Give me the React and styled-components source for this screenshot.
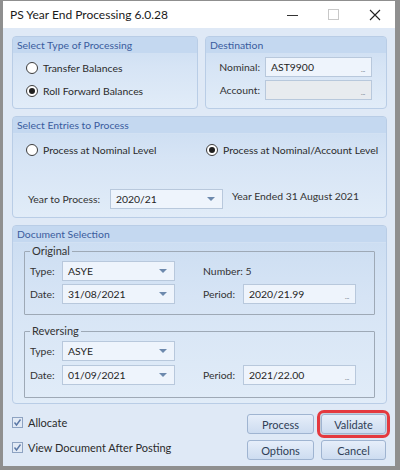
import styled, { createGlobalStyle } from 'styled-components';

const Global = createGlobalStyle`
  html, body { margin: 0; padding: 0; background: #ffffff; }
  body { font-family: Lato, "Noto Sans", sans-serif; font-size: 10.4px; color: #2b2b2b; }
`;

// window frame
const Frame = styled.div`
  width: 400px;
  height: 470px;
  box-sizing: border-box;
  background: #8f8f8f;
  padding: 1px 5px 4px 3px;
  display: flex;
  flex-direction: column;
`;

const TitleBar = styled.div`
  height: 27px;
  background: #ffffff;
  display: flex;
  align-items: center;
  padding-left: 7px;
  flex-shrink: 0;
`;

const Title = styled.div`
  flex: 1;
  font-size: 12px;
  color: #1a1a1a;
`;

const WinBtn = styled.div`
  width: 41px;
  height: 27px;
  display: flex;
  align-items: center;
  justify-content: center;
`;

const Body = styled.div`
  flex: 1;
  background: #dfe9f6;
  padding: 8px 8px 0 9px;
  display: flex;
  flex-direction: column;
  gap: 7px;
`;

const Row = styled.div`
  display: flex;
  gap: 7px;
`;

// blue panel with header band
const Panel = styled.div`
  width: ${p => p.$w || 'auto'};
  height: ${p => p.$h}px;
  flex-shrink: 0;
  box-sizing: border-box;
  border: 1px solid #b9cde6;
  border-radius: 4px;
  background: linear-gradient(#cadcf1 0%, #d6e4f5 40%, #e1ecf8 100%);
  display: flex;
  flex-direction: column;
  overflow: hidden;
`;

const PanelHead = styled.div`
  height: 16px;
  flex-shrink: 0;
  background: #c4d8f0;
  border-bottom: 1px solid #d2e1f3;
  color: #3a5c9e;
  padding-left: 4px;
  display: flex;
  align-items: center;
  font-size: 10.4px;
`;

const PanelBody = styled.div`
  flex: 1;
  display: flex;
  flex-direction: column;
  padding: ${p => p.$pad};
  gap: ${p => p.$gap || 0}px;
`;

const RadioRow = styled.label`
  display: flex;
  align-items: center;
  gap: 5px;
  width: ${p => p.$w || 'auto'};
  height: 20px;
  white-space: nowrap;
`;

const RadioDot = styled.span`
  width: 12px;
  height: 12px;
  box-sizing: border-box;
  border-radius: 50%;
  border: 1px solid #3d3d3d;
  background: #ffffff;
  display: flex;
  align-items: center;
  justify-content: center;
  &::after {
    content: '';
    width: 6px;
    height: 6px;
    border-radius: 50%;
    background: ${p => (p.$on ? '#1f1f1f' : 'transparent')};
  }
`;

const FieldRow = styled.div`
  display: flex;
  align-items: center;
  height: 20px;
  gap: ${p => p.$gap ?? 5}px;
`;

const Label = styled.span`
  width: ${p => p.$w}px;
  text-align: ${p => p.$align || 'left'};
  margin-left: ${p => p.$ml || 0}px;
  margin-top: ${p => p.$mt || 0}px;
  padding-left: ${p => p.$pl || 0}px;
  flex-shrink: 0;
  white-space: nowrap;
  color: #333;
`;

const Input = styled.div`
  width: ${p => p.$w}px;
  height: 20px;
  box-sizing: border-box;
  border: 1px solid #b8c8dc;
  background: ${p => (p.$disabled ? '#e8ebef' : '#eef4fc')};
  display: flex;
  align-items: center;
  padding: 0 6px 0 5px;
  color: #1e1e1e;
  flex-shrink: 0;
`;

const InputText = styled.span`
  flex: 1;
`;

const Dots = styled.span`
  color: #8a94a2;
  font-size: 8px;
  margin-top: 3px;
  letter-spacing: -0.5px;
`;

const Arrow = styled.span`
  width: 0;
  height: 0;
  border-left: 4px solid transparent;
  border-right: 4px solid transparent;
  border-top: 4px solid #6d89ad;
  margin-right: 1px;
`;

const Group = styled.fieldset`
  margin: 0;
  border: 1px solid #9ea9b6;
  border-radius: 1px;
  padding: 4px 0 6px 5px;
  display: flex;
  flex-direction: column;
  gap: ${p => p.$gap}px;
  height: ${p => p.$h}px;
  box-sizing: border-box;
  & > legend {
    padding: 0 2px;
    margin-left: 0;
    color: #333;
    font-size: 11px;
    line-height: 12px;
  }
`;

const Footer = styled.div`
  flex: 1;
  display: flex;
  justify-content: space-between;
`;

const Checks = styled.div`
  display: flex;
  flex-direction: column;
  gap: 5px;
  padding-top: 1px;
`;

const CheckRow = styled.label`
  display: flex;
  align-items: center;
  gap: 5px;
  height: 20px;
  font-size: 11px;
`;

const Box = styled.span`
  width: 11px;
  height: 11px;
  box-sizing: border-box;
  border: 1px solid #8ea3c2;
  background: #e2eaf5;
  display: flex;
  align-items: center;
  justify-content: center;
`;

const Buttons = styled.div`
  display: grid;
  grid-template-columns: 67px 65px;
  grid-auto-rows: 20px;
  column-gap: 7px;
  row-gap: 6px;
  padding-top: 3px;
  margin-right: 1px;
`;

const Button = styled.div`
  box-sizing: border-box;
  height: 20px;
  border: 1px solid #9fb4d1;
  border-radius: 3px;
  background: linear-gradient(#e6eefa, #cddcf0);
  display: flex;
  align-items: center;
  justify-content: center;
  color: #2f3e56;
  font-size: 11px;
  ${p => p.$focus && `
    outline: 3px solid #e4393f;
    outline-offset: 1px;
    box-shadow: 0 0 4px rgba(0,0,0,0.3);
  `}
`;

const Combo = ({ w, value }) => (
  <Input $w={w}>
    <InputText>{value}</InputText>
    <Arrow />
  </Input>
);

const Lookup = ({ w, value, disabled }) => (
  <Input $w={w} $disabled={disabled}>
    <InputText>{value}</InputText>
    <Dots>...</Dots>
  </Input>
);

const Radio = ({ on, children, w }) => (
  <RadioRow $w={w}>
    <RadioDot $on={on} />
    {children}
  </RadioRow>
);

const Check = ({ children }) => (
  <CheckRow>
    <Box>
      <svg width="9" height="9" viewBox="0 0 9 9">
        <path d="M1.5 4.5 L3.5 7 L7.5 1.5" fill="none" stroke="#5b78a6" strokeWidth="1.4" />
      </svg>
    </Box>
    {children}
  </CheckRow>
);

const DocGroup = ({ title, number, date, period, h, gap }) => (
  <Group $h={h} $gap={gap}>
    <legend>{title}</legend>
    <FieldRow $gap={0}>
      <Label $w={32}>Type:</Label>
      <Combo w={113} value="ASYE" />
      {number && <Label $w={80} $ml={28}>Number: 5</Label>}
    </FieldRow>
    <FieldRow $gap={0}>
      <Label $w={32}>Date:</Label>
      <Combo w={113} value={date} />
      <Label $w={40} $ml={28}>Period:</Label>
      <Lookup w={113} value={period} />
    </FieldRow>
  </Group>
);

const App = () => (
  <>
    <Global />
    <Frame>
      <TitleBar>
        <Title>PS Year End Processing 6.0.28</Title>
        <WinBtn>
          <svg width="12" height="12" viewBox="0 0 12 12">
            <path d="M0 6.5 H11" stroke="#333" strokeWidth="1" />
          </svg>
        </WinBtn>
        <WinBtn>
          <svg width="11" height="11" viewBox="0 0 11 11">
            <rect x="0.5" y="0.5" width="10" height="10" fill="none" stroke="#c8c8c8" strokeWidth="1" />
          </svg>
        </WinBtn>
        <WinBtn>
          <svg width="12" height="12" viewBox="0 0 12 12">
            <path d="M1 1 L11 11 M11 1 L1 11" stroke="#222" strokeWidth="1.1" />
          </svg>
        </WinBtn>
      </TitleBar>
      <Body>
        <Row>
          <Panel $w="186px" $h={73}>
            <PanelHead>Select Type of Processing</PanelHead>
            <PanelBody $pad="4px 0 0 13px" $gap={3}>
              <Radio>Transfer Balances</Radio>
              <Radio on>Roll Forward Balances</Radio>
            </PanelBody>
          </Panel>
          <Panel $w="182px" $h={73}>
            <PanelHead>Destination</PanelHead>
            <PanelBody $pad="3px 0 0 9px" $gap={3}>
              <FieldRow>
                <Label $w={45} $align="right">Nominal:</Label>
                <Lookup w={107} value="AST9900" />
              </FieldRow>
              <FieldRow>
                <Label $w={45} $align="right">Account:</Label>
                <Lookup w={107} value="" disabled />
              </FieldRow>
            </PanelBody>
          </Panel>
        </Row>
        <Panel $h={102}>
          <PanelHead>Select Entries to Process</PanelHead>
          <PanelBody $pad="6px 0 0 13px" $gap={29}>
            <FieldRow $gap={0}>
              <Radio w="180px">Process at Nominal Level</Radio>
              <Radio on>Process at Nominal/Account Level</Radio>
            </FieldRow>
            <FieldRow $gap={0}>
              <Label $w={82} $pl={2}>Year to Process:</Label>
              <Combo w={113} value="2020/21" />
              <Label $w={160} $ml={9} $mt={-6}>Year Ended 31 August 2021</Label>
            </FieldRow>
          </PanelBody>
        </Panel>
        <Panel $h={179}>
          <PanelHead>Document Selection</PanelHead>
          <PanelBody $pad="2px 11px 0 11px" $gap={10}>
            <DocGroup title="Original" number date="31/08/2021" period="2020/21.99" h={70} gap={3} />
            <DocGroup title="Reversing" date="01/09/2021" period="2021/22.00" h={73} gap={4} />
          </PanelBody>
        </Panel>
        <Footer>
          <Checks>
            <Check>Allocate</Check>
            <Check>View Document After Posting</Check>
          </Checks>
          <Buttons>
            <Button>Process</Button>
            <Button $focus>Validate</Button>
            <Button>Options</Button>
            <Button>Cancel</Button>
          </Buttons>
        </Footer>
      </Body>
    </Frame>
  </>
);

export default App;
